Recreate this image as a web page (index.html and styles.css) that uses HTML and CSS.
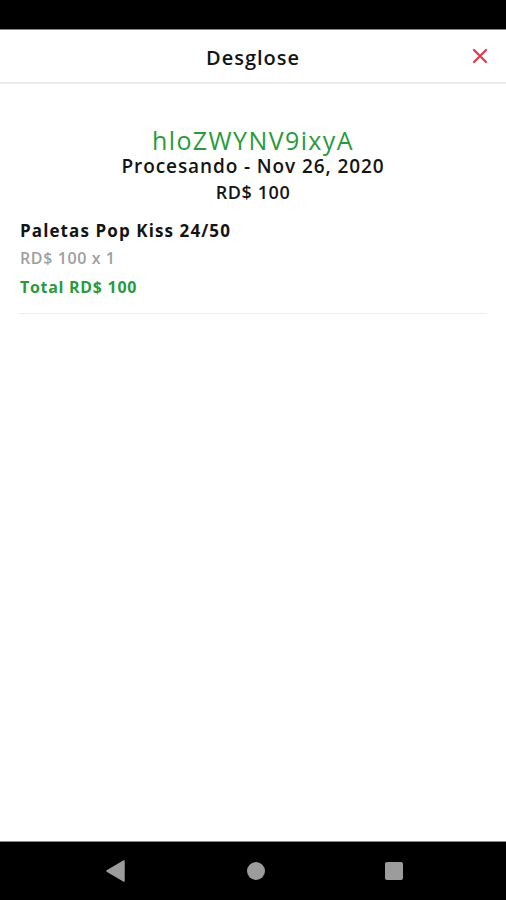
FILE: index.html
```html
<!DOCTYPE html>
<html lang="es">
<head>
    <meta charset="UTF-8">
    <meta name="viewport" content="width=device-width, initial-scale=1.0">
    <title>Desglose</title>
    <link rel="stylesheet" href="styles.css">
</head>
<body>
    <div class="phone">
        <div class="status-bar"></div>

        <header class="top-bar">
            <h1>Desglose</h1>
            <button class="close-btn" aria-label="Cerrar">
                <svg width="16" height="16" viewBox="0 0 16 16">
                    <path d="M2 2 L14 14 M14 2 L2 14" stroke="#e53950" stroke-width="2.2" stroke-linecap="round"/>
                </svg>
            </button>
        </header>

        <main class="content">
            <div class="order-summary">
                <div class="order-id">hloZWYNV9ixyA</div>
                <div class="order-status">Procesando - Nov 26, 2020</div>
                <div class="order-amount">RD$ 100</div>
            </div>

            <div class="item">
                <div class="item-name">Paletas Pop Kiss 24/50</div>
                <div class="item-price">RD$ 100 x 1</div>
                <div class="item-total">Total RD$ 100</div>
            </div>
        </main>

        <nav class="nav-bar">
            <svg width="22" height="22" viewBox="0 0 22 22">
                <path d="M19 1 L19 21 L2 11 Z" fill="#9c9c9c" stroke="#9c9c9c" stroke-width="1.5" stroke-linejoin="round"/>
            </svg>
            <span class="nav-circle"></span>
            <span class="nav-square"></span>
        </nav>
    </div>
</body>
</html>
```

FILE: styles.css
```css
:root {
    --green: #2a9a3c;
    --red: #e53950;
    --text-color: #141414;
    --muted: #9e9e9e;
    --line: #ececec;
}

* {
    margin: 0;
    padding: 0;
    box-sizing: border-box;
}

body {
    font-family: 'Open Sans', 'DejaVu Sans', sans-serif;
    color: var(--text-color);
    background-color: white;
}

.phone {
    display: flex;
    flex-direction: column;
    height: 900px;
}

.status-bar {
    height: 30px;
    background-color: black;
    border-bottom: 1px solid #8a8a8a;
}

.top-bar {
    height: 54px;
    display: flex;
    align-items: center;
    justify-content: center;
    position: relative;
    border-bottom: 2px solid var(--line);
}

.top-bar h1 {
    font-size: 20px;
    font-weight: 600;
    letter-spacing: 1px;
    padding-top: 2px;
}

.close-btn {
    position: absolute;
    right: 18px;
    top: 18px;
    background: none;
    border: none;
    display: flex;
}

.content {
    flex: 1;
    padding: 0 19px;
}

.order-summary {
    display: flex;
    flex-direction: column;
    align-items: center;
    padding-top: 43px;
}

.order-id {
    color: var(--green);
    font-size: 25px;
    line-height: 26px;
    letter-spacing: 1.4px;
}

.order-status {
    font-size: 19px;
    font-weight: 600;
    line-height: 26px;
    letter-spacing: 0.9px;
}

.order-amount {
    font-size: 18px;
    font-weight: 600;
    line-height: 26px;
    letter-spacing: 0.6px;
}

.item {
    padding: 13px 1px 11px;
    border-bottom: 1px solid var(--line);
}

.item-name {
    font-size: 17px;
    font-weight: 700;
    line-height: 26px;
    letter-spacing: 1.1px;
}

.item-price {
    color: var(--muted);
    font-size: 16px;
    font-weight: 600;
    line-height: 28px;
    letter-spacing: 0.6px;
}

.item-total {
    color: var(--green);
    font-size: 16px;
    font-weight: 700;
    line-height: 30px;
    letter-spacing: 0.7px;
}

.nav-bar {
    height: 59px;
    background-color: black;
    border-top: 1px solid #8a8a8a;
    display: flex;
    align-items: center;
    justify-content: center;
    gap: 120px;
    padding-left: 2px;
}

.nav-circle {
    width: 18px;
    height: 18px;
    border-radius: 50%;
    background-color: #9c9c9c;
}

.nav-square {
    width: 18px;
    height: 18px;
    border-radius: 2px;
    background-color: #9c9c9c;
}
```
